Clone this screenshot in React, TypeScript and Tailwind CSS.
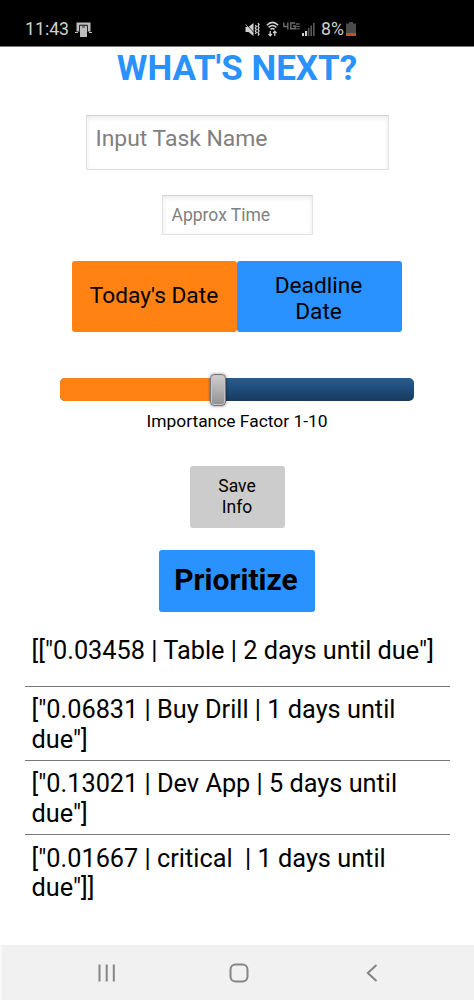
import { useState } from "react";

const tasks = [
  '[["0.03458 | Table | 2 days until due"]',
  '["0.06831 | Buy Drill | 1 days until due"]',
  '["0.13021 | Dev App | 5 days until due"]',
  '["0.01667 | critical  | 1 days until due"]]',
];

const StatusBar = () => (
  <header className="h-[47px] shrink-0 bg-black border-b border-[#777] flex items-center pt-[13px] pl-[25px] pr-[118px] text-[#d0d0d0] text-[17.7px] leading-none">
    <span>11:43</span>
    <svg width="17" height="16" viewBox="0 0 17 16" className="ml-[6px]">
      <path d="M1.5 0.5h14v9h-3v-6h-8v6h-3z" fill="#bdbdbd" />
      <path d="M5 4h7v11H5z" fill="#bdbdbd" />
      <path d="M0 10.5h3M14 10.5h3" stroke="#bdbdbd" strokeWidth="1.2" />
      <path d="M4.5 9V3.2h8V9M7 5h3" stroke="#222" strokeWidth="0.9" fill="none" />
    </svg>
    <div className="ml-auto flex items-center">
      <svg width="15" height="15" viewBox="0 0 15 15" className="mr-[6px]">
        <path d="M0.5 5h3L8.5 1v13l-5-4h-3z" fill="#d0d0d0" />
        <path d="M0.5 1.5l9 10" stroke="#000" strokeWidth="1" />
        <path d="M0.5 2.3l8 9" stroke="#d0d0d0" strokeWidth="0.8" />
        <path
          d="M10.3 3l1 1.5-1 1.5 1 1.5-1 1.5 1 1.5-1 1.5M13 1l1 1.6-1 1.6 1 1.6-1 1.6 1 1.6-1 1.6 1 1.6-1 1.4"
          stroke="#d0d0d0"
          strokeWidth="1.3"
          fill="none"
        />
      </svg>
      <svg width="13" height="16" viewBox="0 0 13 16" fill="none" stroke="#d0d0d0" className="mr-[4px]">
        <path d="M0.8 4.2Q6.5 -1.4 12.2 4.2M2.6 6.4Q6.5 2.6 10.4 6.4M4.5 8.4Q6.5 6.7 8.5 8.4" strokeWidth="1.5" />
        <path d="M4.2 10v4.5M2.5 13l1.7 1.8L5.9 13M8.8 15v-4.5M7.1 12l1.7-1.8L10.5 12" strokeWidth="1.3" />
      </svg>
      <svg width="17" height="16" viewBox="0 0 17 16" fill="none" stroke="#6c6c6c" className="mr-[2px]">
        <path d="M0.8 1.5v4h4.7M4.8 1.5v7M12 2H7.8v5.8h4.4V5H10" strokeWidth="1.4" />
        <path d="M13 2l1 2 1-2M16 2v2M13 5.5h4M13 7.8h4" strokeWidth="0.9" />
      </svg>
      <svg width="13" height="14" viewBox="0 0 13 14" className="mr-[6px]">
        <path d="M0 11h2v3H0zM3 9h2v5H3z" fill="#d0d0d0" />
        <path d="M5.8 6h1.6v8H5.8zM8.4 3.5H10V14H8.4zM11 1h1.6v13H11z" fill="#5a5a5a" />
      </svg>
      <span>8%</span>
      <svg width="10" height="14" viewBox="0 0 10 14" className="ml-[2px]">
        <path d="M3 0h4v1.5h3V14H0V1.5h3z" fill="#4b4b4b" />
        <path d="M0 11h10v3H0z" fill="#c0522b" />
      </svg>
    </div>
  </header>
);

type FieldProps = {
  placeholder: string;
  className: string;
};

const Field = ({ placeholder, className }: FieldProps) => (
  <input
    placeholder={placeholder}
    className={`border border-[#e2e2e2] border-t-[#d2d2d2] bg-white px-[9px] shadow-[inset_0_2px_5px_rgba(0,0,0,0.09)] outline-none placeholder:text-[#808080] ${className}`}
  />
);

const ImportanceSlider = ({ value }: { value: number }) => (
  <div className="relative mt-[46px] h-[23px] w-[354px] rounded-[5px] bg-linear-to-b from-[#265d92] to-[#183b5f]">
    <div className="h-full rounded-l-[5px] bg-[#ff8213]" style={{ width: `${value}%` }} />
    <div
      className="absolute -top-1 h-8 w-4 -translate-x-1/2 rounded-[4px] border border-[#77777a] bg-linear-to-b from-[#cfcfcf] to-[#929292] shadow-[inset_0_0_0_1px_#c4c4c4,0_0_3px_rgba(0,0,0,0.5)]"
      style={{ left: `${value}%` }}
    />
  </div>
);

const NavBar = () => (
  <nav className="mt-auto flex h-[55px] shrink-0 items-center border-l-2 border-[#f9f9f9] bg-[#f1f1f1] pl-[96px] text-[#858585]">
    <svg width="18" height="18" viewBox="0 0 18 18" stroke="currentColor" strokeWidth="2">
      <path d="M1.5 0.5v17M8.7 0.5v17M15.8 0.5v17" />
    </svg>
    <svg width="20" height="20" viewBox="0 0 20 20" fill="none" stroke="currentColor" strokeWidth="2" className="ml-[113px]">
      <rect x="1.5" y="1.5" width="17" height="17" rx="5" />
    </svg>
    <svg width="12" height="18" viewBox="0 0 12 18" fill="none" stroke="currentColor" strokeWidth="2" className="ml-[117px]">
      <path d="M10.5 1L1.8 9l8.7 8" />
    </svg>
  </nav>
);

const App = () => {
  const [importance] = useState(44.6);

  return (
    <div className="flex h-[1000px] w-[474px] flex-col bg-white font-[Roboto,sans-serif] text-black">
      <StatusBar />
      <main className="flex flex-col items-center">
        <h1 className="h-[42px] pt-px text-[35px] font-bold leading-[42px] text-[#2a92ff]">WHAT'S NEXT?</h1>
        <Field placeholder="Input Task Name" className="mt-[26px] h-[55px] w-[303px] pb-[8px] text-[22.9px]" />
        <Field placeholder="Approx Time" className="mt-[25px] h-[40px] w-[151px] text-[17.5px]" />

        <div className="mt-[26px] flex h-[71px] w-[330px] text-[22.7px] leading-[26.5px]">
          <button className="w-1/2 rounded-[3px] bg-[#ff8213] pr-px">Today's Date</button>
          <button className="w-1/2 rounded-[3px] bg-[#2a92ff] pl-8 pr-[34px] pt-[5px]">Deadline Date</button>
        </div>

        <ImportanceSlider value={importance} />
        <p className="mt-[10px] text-[17.4px] leading-[21px]">Importance Factor 1-10</p>

        <button className="mt-[34px] h-[62px] w-[95px] rounded-[3px] bg-[#ccc] px-6 pb-px text-[17.5px] leading-[20.5px]">
          Save Info
        </button>
        <button className="mt-[22px] h-[62px] w-[156px] rounded-[3px] bg-[#2a92ff] pb-[4px] pr-[2px] text-[30px] font-bold">
          Prioritize
        </button>

        <ul className="mt-[13px] w-[425px] divide-y divide-[#777] text-[25.3px] leading-[29.4px]">
          {tasks.map((task) => (
            <li key={task} className="h-[74.2px] whitespace-pre-wrap px-[7px] pt-[8.5px] first:h-[61.8px] first:pt-[11px]">
              {task}
            </li>
          ))}
        </ul>
      </main>
      <NavBar />
    </div>
  );
};

export default App;
